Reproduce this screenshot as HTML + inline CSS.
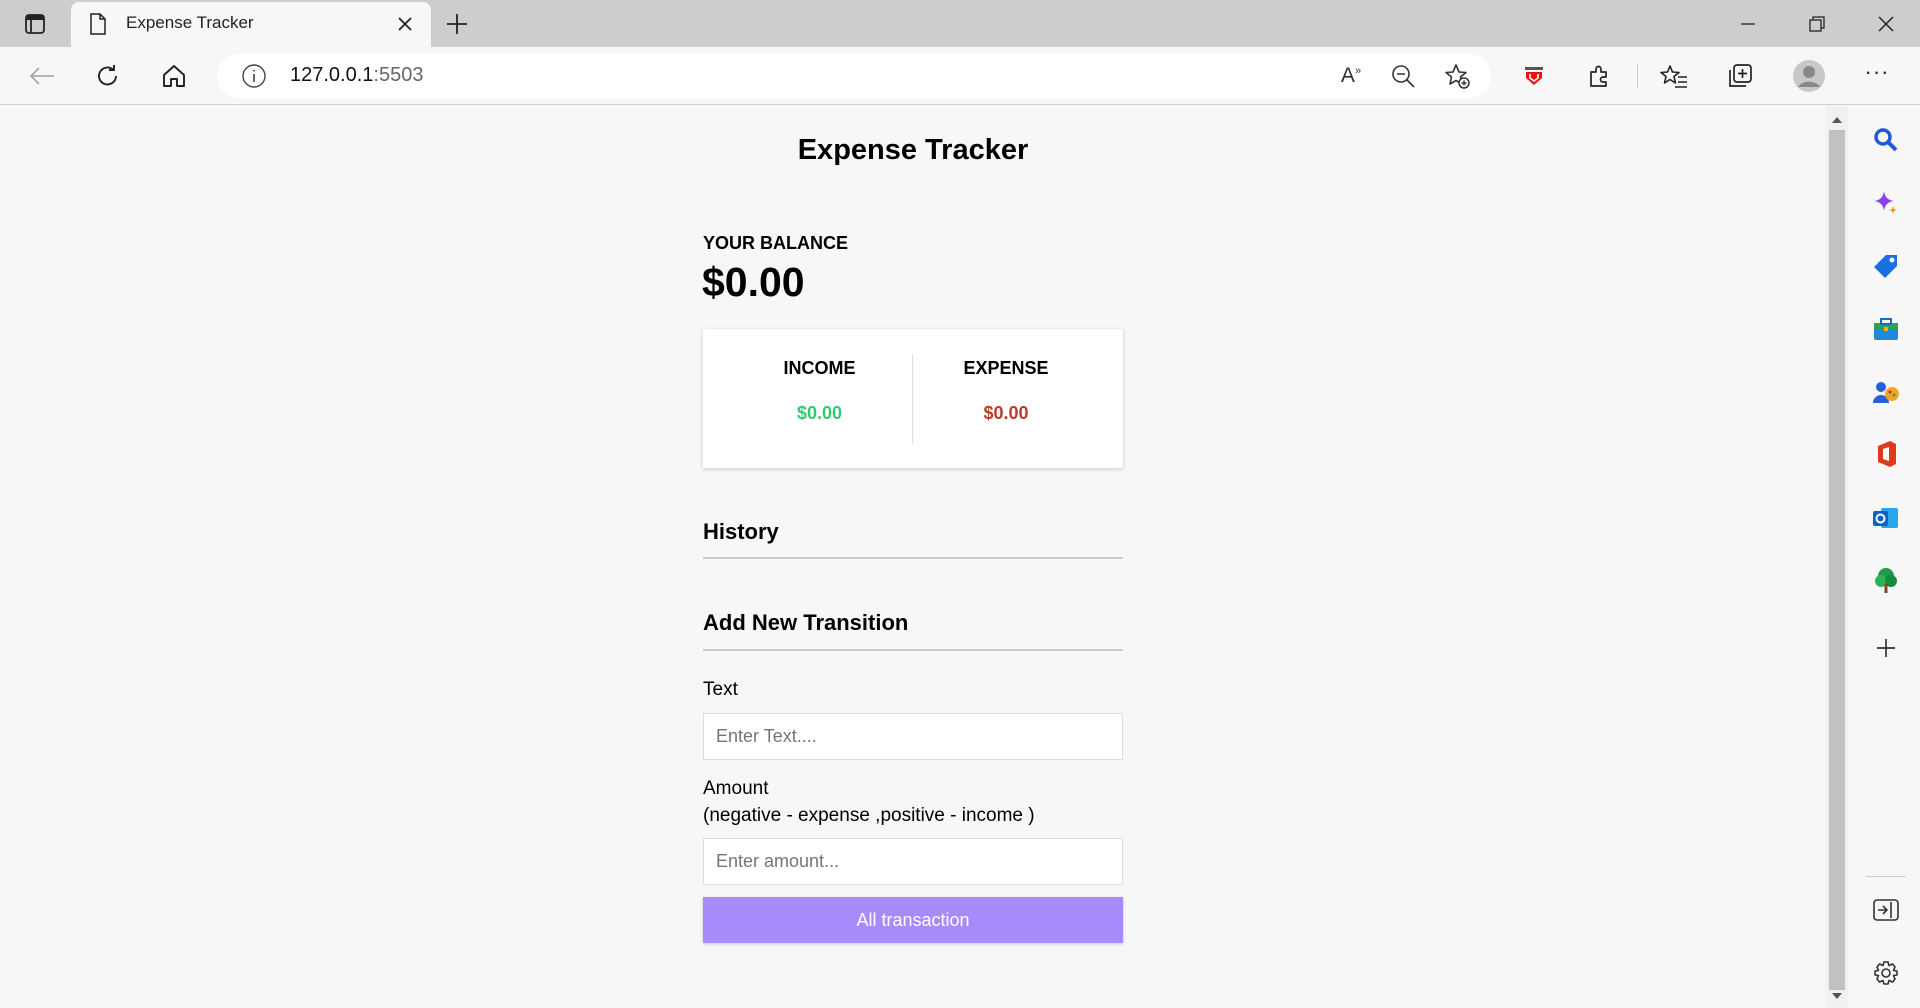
<!DOCTYPE html>
<html><head><meta charset="utf-8"><style>
*{margin:0;padding:0;box-sizing:border-box}
body{width:1920px;height:1008px;overflow:hidden;background:#f7f7f7;font-family:"Liberation Sans",sans-serif;position:relative}
.a{position:absolute}
.t{font-family:"Liberation Sans",sans-serif}
.ic{position:absolute;transform:translate(-50%,-50%)}
</style></head><body>
<div class="a" style="left:0;top:0;width:1920px;height:47px;background:#cdcdcd"></div>
<div class="a" style="left:71px;top:2px;width:360px;height:46px;background:#f7f7f7;border-radius:8px 8px 0 0"></div>
<svg class="ic" style="left:35px;top:24px" width="22" height="22" viewBox="0 0 22 22"><rect x="2" y="2" width="18" height="18" rx="3" fill="none" stroke="#222" stroke-width="1.8"/><rect x="2" y="2" width="18" height="5" fill="#222"/><line x1="7" y1="7" x2="7" y2="20" stroke="#222" stroke-width="1.8"/></svg>
<svg class="ic" style="left:98px;top:24px" width="18" height="22" viewBox="0 0 18 22"><path d="M2 1h9l5 5v15H2z M11 1v5h5" fill="none" stroke="#222" stroke-width="1.5"/></svg>
<div class="a" style="left:126px;top:13px;font-size:17px;color:#222">Expense Tracker</div>
<svg class="ic" style="left:405px;top:24px" width="16" height="16"><path d="M2 2L14 14M14 2L2 14" stroke="#222" stroke-width="1.8"/></svg>
<svg class="ic" style="left:457px;top:24px" width="22" height="22"><path d="M11 1V21M1 11H21" stroke="#222" stroke-width="1.8"/></svg>
<svg class="ic" style="left:1748px;top:24px" width="16" height="16"><path d="M1 8H15" stroke="#222" stroke-width="1.3"/></svg>
<svg class="ic" style="left:1817px;top:24px" width="16" height="16"><rect x="1" y="4" width="11" height="11" fill="none" stroke="#222" stroke-width="1.3"/><path d="M4 4V1H15V12H12" fill="none" stroke="#222" stroke-width="1.3"/></svg>
<svg class="ic" style="left:1886px;top:24px" width="16" height="16"><path d="M1 1L15 15M15 1L1 15" stroke="#222" stroke-width="1.5"/></svg>
<div class="a" style="left:0;top:47px;width:1920px;height:58px;background:#f7f7f7;border-bottom:1px solid #d0d0d0"></div>
<svg class="ic" style="left:42px;top:76px" width="26" height="20"><path d="M25 10H2M10 2L2 10L10 18" fill="none" stroke="#aaa" stroke-width="1.8"/></svg>
<svg class="ic" style="left:108px;top:76px" width="26" height="26" viewBox="0 0 26 26"><path d="M21 13A8.5 8.5 0 1 1 18 6.5M19 2V7H14" fill="none" stroke="#222" stroke-width="1.9"/></svg>
<svg class="ic" style="left:174px;top:76px" width="26" height="26" viewBox="0 0 26 26"><path d="M3 12L13 3L23 12V23H16V16H10V23H3Z" fill="none" stroke="#222" stroke-width="1.9" stroke-linejoin="round"/></svg>
<div class="a" style="left:217px;top:54px;width:1274px;height:44px;background:#fff;border-radius:22px"></div>
<svg class="ic" style="left:254px;top:76px" width="26" height="26"><circle cx="13" cy="13" r="11" fill="none" stroke="#444" stroke-width="1.4"/><path d="M13 11V19M13 7V8.5" stroke="#444" stroke-width="1.6"/></svg>
<div class="a" style="left:290px;top:64px;font-size:20px;color:#111">127.0.0.1<span style="color:#666">:5503</span></div>
<div class="ic" style="left:1351px;top:76px;font-size:21px;color:#333">A<sup style="font-size:11px">»</sup></div>
<svg class="ic" style="left:1403px;top:76px" width="26" height="26"><circle cx="11" cy="11" r="8" fill="none" stroke="#333" stroke-width="1.6"/><path d="M7 11H15M17 17L24 24" stroke="#333" stroke-width="1.6"/></svg>
<svg class="ic" style="left:1457px;top:76px" width="28" height="28" viewBox="0 0 28 28"><path d="M13 3L16 10L23 10.5L17.5 15L19 22L13 18.5L7 22L8.5 15L3 10.5L10 10Z" fill="none" stroke="#333" stroke-width="1.6" stroke-linejoin="round"/><circle cx="21" cy="21" r="5" fill="#f7f7f7" stroke="#333" stroke-width="1.5"/><path d="M21 18.5V23.5M18.5 21H23.5" stroke="#333" stroke-width="1.4"/></svg>
<svg class="ic" style="left:1534px;top:76px" width="24" height="24"><rect x="3" y="3" width="18" height="3" fill="#555"/><path d="M4 8H20V14L12 21L4 14Z" fill="#e11"/><path d="M8 10V14L12 17L16 14V10" fill="none" stroke="#fff" stroke-width="1.6"/></svg>
<svg class="ic" style="left:1600px;top:76px" width="26" height="26" viewBox="0 0 26 26"><path d="M4 9H9V6A2.5 2.5 0 0 1 14 6V9H19V14H16A2.5 2.5 0 0 0 16 19H19V23H4Z" fill="none" stroke="#222" stroke-width="1.7" stroke-linejoin="round"/></svg>
<div class="a" style="left:1637px;top:64px;width:1px;height:24px;background:#ccc"></div>
<svg class="ic" style="left:1674px;top:76px" width="28" height="26" viewBox="0 0 28 26"><path d="M10 3L12.5 9L19 9.5L14 13.5L15.5 20L10 16.5L4.5 20L6 13.5L1 9.5L7.5 9Z" fill="none" stroke="#222" stroke-width="1.6" stroke-linejoin="round"/><path d="M18 14H27M18 19H27M15 24H27" stroke="#222" stroke-width="1.6"/></svg>
<svg class="ic" style="left:1740px;top:76px" width="28" height="28"><rect x="8" y="3" width="17" height="17" rx="3" fill="none" stroke="#222" stroke-width="1.7"/><path d="M4 8V24H20" fill="none" stroke="#222" stroke-width="1.7"/><path d="M16.5 7V16M12 11.5H21" stroke="#222" stroke-width="1.7"/></svg>
<svg class="ic" style="left:1809px;top:76px" width="34" height="34"><circle cx="17" cy="17" r="16" fill="#c8c8c8"/><circle cx="17" cy="13" r="6" fill="#888"/><path d="M6 28A12 9 0 0 1 28 28Z" fill="#888"/></svg>
<div class="ic" style="left:1877px;top:72px;font-size:22px;color:#222;letter-spacing:1px">···</div>
<div class="a" style="left:1826px;top:106px;width:22px;height:902px;background:#f1f1f1"></div>
<div class="a" style="left:1829px;top:130px;width:16px;height:860px;background:#c1c1c1"></div>
<svg class="ic" style="left:1837px;top:120px" width="10" height="6"><path d="M0 6L5 0L10 6Z" fill="#555"/></svg>
<svg class="ic" style="left:1837px;top:996px" width="10" height="6"><path d="M0 0L5 6L10 0Z" fill="#555"/></svg>
<div class="a" style="left:1849px;top:106px;width:71px;height:902px;background:#f7f7f7"></div>
<svg class="ic" style="left:1886px;top:140px" width="26" height="26"><circle cx="10" cy="10" r="7" fill="none" stroke="#1e5ad6" stroke-width="3.5"/><path d="M15 15L23 23" stroke="#1e5ad6" stroke-width="4"/></svg>
<svg class="ic" style="left:1886px;top:203px" width="26" height="26"><path d="M11 1Q12 10 21 11Q12 12 11 21Q10 12 1 11Q10 10 11 1Z" fill="#8a3ff0"/><path d="M20 16L21 19L24 20L21 21L20 24L19 21L16 20L19 19Z" fill="#e89a1a"/></svg>
<svg class="ic" style="left:1886px;top:266px" width="26" height="26"><path d="M13 2H24V13L12 25L1 14Z" fill="#1a6ee0"/><circle cx="19" cy="7" r="2.5" fill="#fff"/></svg>
<svg class="ic" style="left:1886px;top:329px" width="26" height="24"><rect x="1" y="6" width="24" height="17" rx="2" fill="#1f8ad6"/><rect x="1" y="6" width="24" height="6" fill="#2ba34f"/><rect x="8" y="2" width="10" height="5" fill="none" stroke="#1f6ab6" stroke-width="2"/><rect x="11" y="10" width="4" height="4" fill="#f5b400"/></svg>
<svg class="ic" style="left:1886px;top:392px" width="28" height="26"><circle cx="9" cy="8" r="5" fill="#2560d6"/><path d="M1 24A8 8 0 0 1 17 24Z" fill="#2560d6"/><circle cx="20" cy="15" r="7" fill="#f5a524"/><circle cx="18" cy="13" r="1.5" fill="#c24"/><circle cx="22" cy="16" r="1.5" fill="#2a5"/></svg>
<svg class="ic" style="left:1886px;top:454px" width="24" height="28"><path d="M4 6L16 1L22 4V24L16 27L4 22Z" fill="#e03a1e"/><path d="M9 9L15 7V21L9 19Z" fill="#fff"/></svg>
<svg class="ic" style="left:1886px;top:518px" width="28" height="26"><rect x="9" y="3" width="17" height="20" rx="2" fill="#28a8ea"/><rect x="1" y="6" width="15" height="15" rx="2" fill="#0a64c0"/><circle cx="8.5" cy="13.5" r="4" fill="none" stroke="#fff" stroke-width="2"/></svg>
<svg class="ic" style="left:1886px;top:580px" width="26" height="28"><circle cx="13" cy="10" r="8" fill="#1f9a4a"/><circle cx="8" cy="15" r="6" fill="#2db35a"/><circle cx="18" cy="15" r="6" fill="#178a3e"/><rect x="11.5" y="18" width="3" height="9" fill="#7a4a1e"/></svg>
<svg class="ic" style="left:1886px;top:648px" width="22" height="22"><path d="M11 2V20M2 11H20" stroke="#333" stroke-width="1.7"/></svg>
<div class="a" style="left:1866px;top:876px;width:40px;height:1px;background:#ccc"></div>
<svg class="ic" style="left:1886px;top:910px" width="26" height="22"><rect x="1" y="1" width="24" height="20" rx="3" fill="none" stroke="#333" stroke-width="1.6"/><path d="M18 3V19M5 11H14M10 7L14 11L10 15" fill="none" stroke="#333" stroke-width="1.6"/></svg>
<svg class="ic" style="left:1886px;top:973px" width="26" height="26" viewBox="0 0 26 26"><circle cx="13" cy="13" r="4" fill="none" stroke="#333" stroke-width="1.6"/><path d="M11 2H15L16 5.5L19.5 4L22 7L20.5 10.5L24 11V15L20.5 15.5L22 19L19.5 22L16 20.5L15 24H11L10 20.5L6.5 22L4 19L5.5 15.5L2 15V11L5.5 10.5L4 7L6.5 4L10 5.5Z" fill="none" stroke="#333" stroke-width="1.6" stroke-linejoin="round"/></svg>
<div class="a t" style="left:703px;width:420px;top:134px;text-align:center;font-size:29px;font-weight:bold;color:#000">Expense Tracker</div>
<div class="a t" style="left:703px;top:233px;font-size:18px;font-weight:bold;color:#000">YOUR BALANCE</div>
<div class="a t" style="left:702px;top:259px;font-size:41px;font-weight:bold;color:#000">$0.00</div>
<div class="a" style="left:703px;top:329px;width:420px;height:139px;background:#fff;box-shadow:0 1px 4px rgba(0,0,0,0.18)"></div>
<div class="a" style="left:912px;top:354px;width:1px;height:89px;background:#ddd"></div>
<div class="a t" style="left:703px;width:233px;top:358px;text-align:center;font-size:18px;font-weight:bold">INCOME</div>
<div class="a t" style="left:703px;width:233px;top:403px;text-align:center;font-size:18px;font-weight:bold;color:#2ecc71">$0.00</div>
<div class="a t" style="left:912px;width:188px;top:358px;text-align:center;font-size:18px;font-weight:bold">EXPENSE</div>
<div class="a t" style="left:912px;width:188px;top:403px;text-align:center;font-size:18px;font-weight:bold;color:#c0392b">$0.00</div>
<div class="a t" style="left:703px;top:519px;font-size:22px;font-weight:bold">History</div>
<div class="a" style="left:703px;top:557px;width:420px;height:2px;background:#ccc"></div>
<div class="a t" style="left:703px;top:610px;font-size:22px;font-weight:bold">Add New Transition</div>
<div class="a" style="left:703px;top:649px;width:420px;height:2px;background:#ccc"></div>
<div class="a t" style="left:703px;top:679px;font-size:19px">Text</div>
<div class="a" style="left:703px;top:713px;width:420px;height:47px;background:#fff;border:1px solid #ddd"></div>
<div class="a" style="left:716px;top:726px;font-size:18px;color:#757575">Enter Text....</div>
<div class="a t" style="left:703px;top:775px;font-size:19px;line-height:27px">Amount<br>(negative - expense ,positive - income )</div>
<div class="a" style="left:703px;top:838px;width:420px;height:47px;background:#fff;border:1px solid #ddd"></div>
<div class="a" style="left:716px;top:851px;font-size:18px;color:#757575">Enter amount...</div>
<div class="a" style="left:703px;top:897px;width:420px;height:46px;background:#a78bfa;box-shadow:0 1px 3px rgba(0,0,0,0.2);color:#fff;font-size:18px;text-align:center;line-height:46px">All transaction</div>
</body></html>
